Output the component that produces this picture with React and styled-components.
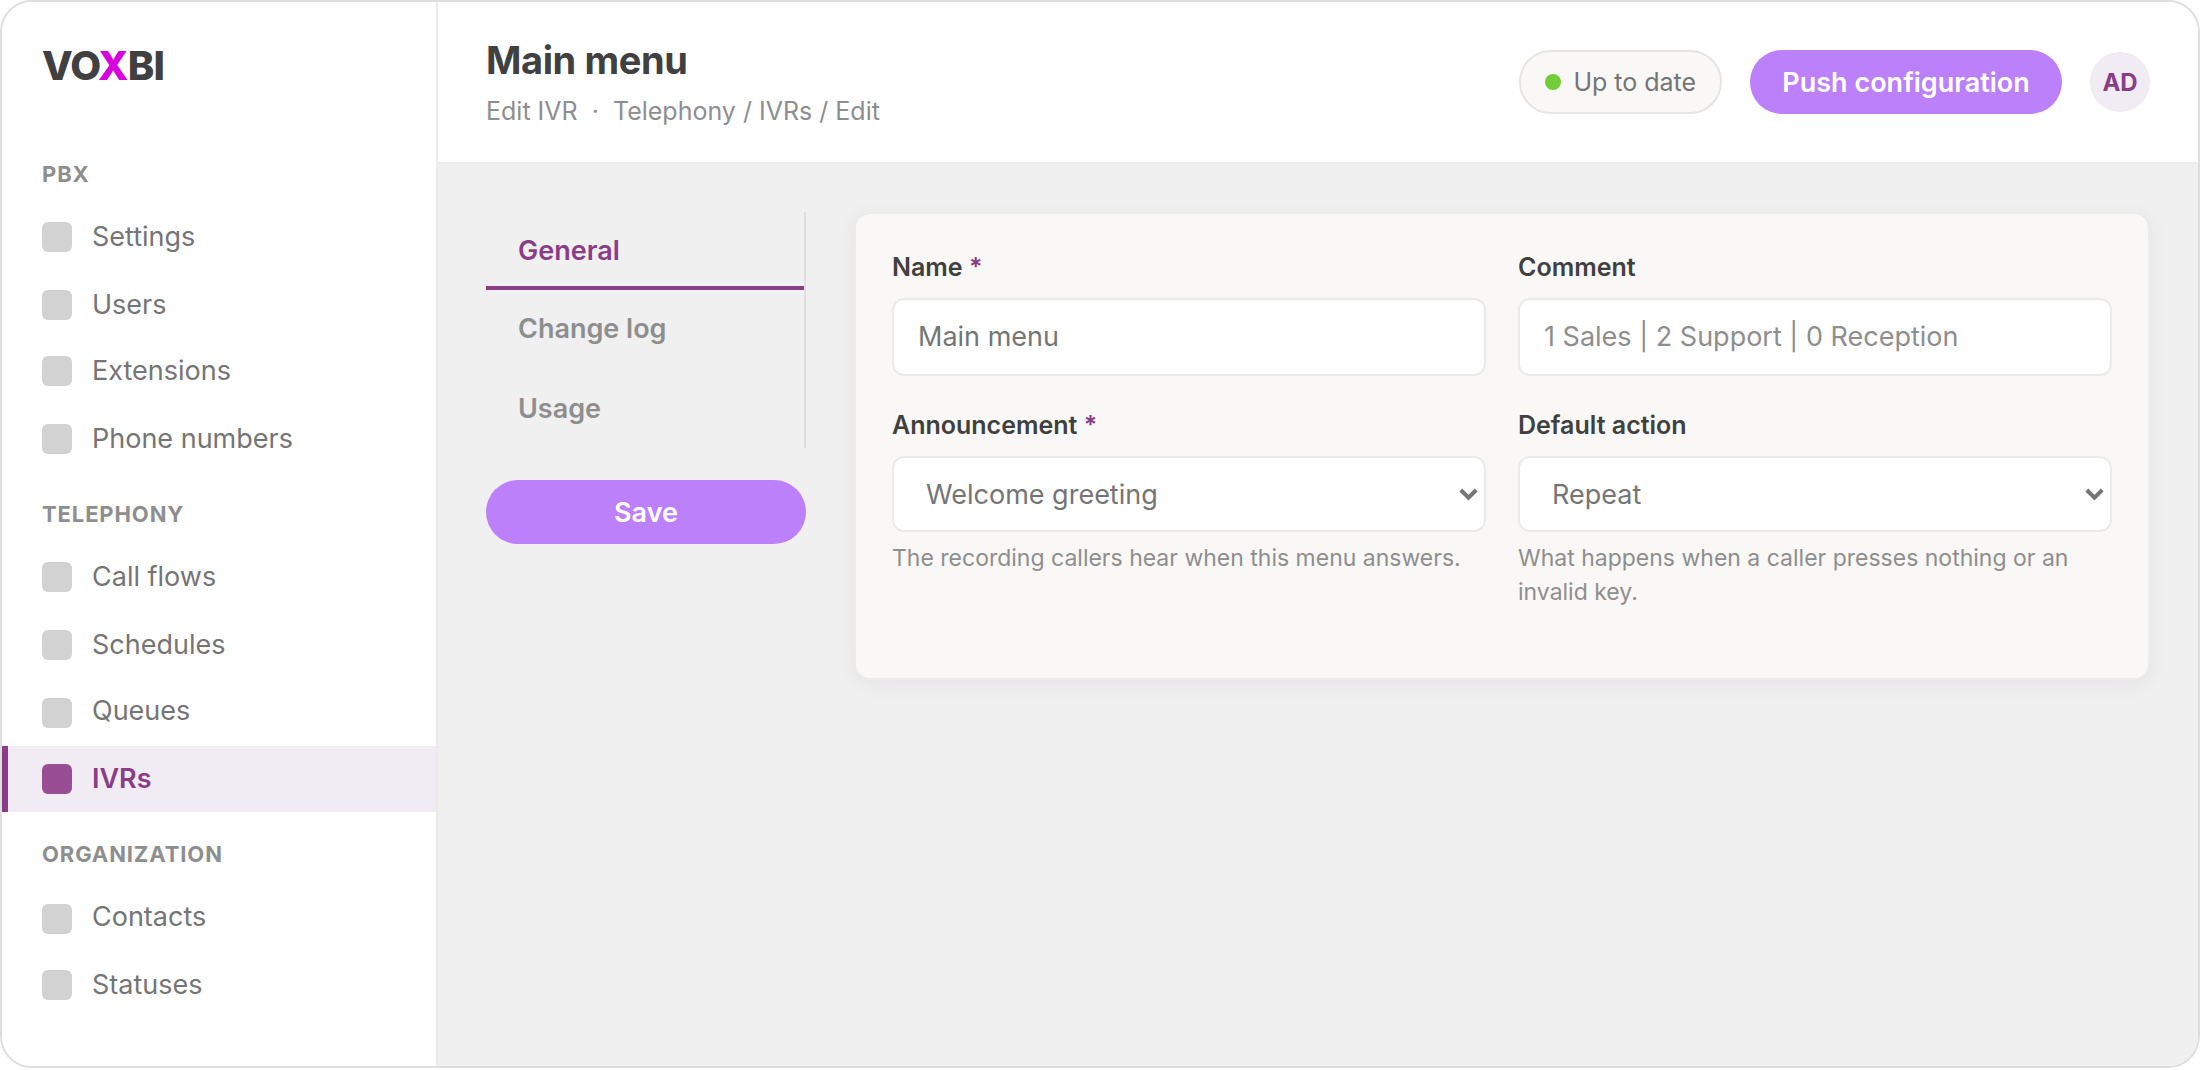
import React, {useState} from 'react'
import styled, {createGlobalStyle} from 'styled-components'

const purple = '#8a3d87'
const line = '#ebebea'

// h: row height, up: label offset from the icon line
const sections = [
  {title: 'PBX', height: 72, items: [
    {name: 'Settings', h: 68},
    {name: 'Users', h: 66},
    {name: 'Extensions', h: 68},
    {name: 'Phone numbers', h: 66},
  ]},
  {title: 'TELEPHONY', height: 72, items: [
    {name: 'Call flows', h: 68},
    {name: 'Schedules', h: 68},
    {name: 'Queues', h: 66, up: 2},
    {name: 'IVRs', h: 66},
  ]},
  {title: 'ORGANIZATION', height: 74, items: [
    {name: 'Contacts', h: 66, up: 2},
    {name: 'Statuses', h: 66},
  ]},
]

const tabs = [
  {name: 'General', h: 78},
  {name: 'Change log', h: 80},
  {name: 'Usage', h: 78},
]

export default function App(){
  const [page, setPage] = useState('IVRs')
  const [tab, setTab] = useState('General')
  return(
    <>
      <Global/>
      <Frame>
        <Sidebar>
          <Logo>VO<span>X</span>BI</Logo>
          {sections.map(s=>(
            <nav key={s.title}>
              <SectionTitle $h={s.height}>{s.title}</SectionTitle>
              {s.items.map(i=>(
                <NavItem key={i.name} $h={i.h} $active={i.name == page} onClick={()=>setPage(i.name)}>
                  <NavIcon $active={i.name == page}/>
                  <NavLabel $up={i.up || 0}>{i.name}</NavLabel>
                </NavItem>
              ))}
            </nav>
          ))}
        </Sidebar>
        <Main>
          <Header>
            <div>
              <Title>Main menu</Title>
              <Crumbs>Edit IVR &nbsp;·&nbsp; Telephony / IVRs / Edit</Crumbs>
            </div>
            <Actions>
              <Status><Dot/>Up to date</Status>
              <Button>Push configuration</Button>
              <Avatar>AD</Avatar>
            </Actions>
          </Header>
          <Content>
            <Side>
              <Tabs>
                {tabs.map(t=>(
                  <Tab key={t.name} $h={t.h} $active={t.name == tab} onClick={()=>setTab(t.name)}>{t.name}</Tab>
                ))}
              </Tabs>
              <Button>Save</Button>
            </Side>
            <Card>
              <Field>
                <Label>Name <b>*</b></Label>
                <Input>Main menu</Input>
              </Field>
              <Field>
                <Label>Comment</Label>
                <Input $muted>1 Sales | 2 Support | 0 Reception</Input>
              </Field>
              <Field>
                <Label>Announcement <b>*</b></Label>
                <Select>Welcome greeting<Chevron/></Select>
                <Hint>The recording callers hear when this menu answers.</Hint>
              </Field>
              <Field>
                <Label>Default action</Label>
                <Select>Repeat<Chevron/></Select>
                <Hint>What happens when a caller presses nothing or an invalid key.</Hint>
              </Field>
            </Card>
          </Content>
        </Main>
      </Frame>
    </>
  )
}

function Chevron(){
  return(
    <svg width='19' height='13' viewBox='0 0 19 13'>
      <path d='M1.8 2 L9.5 9.6 L17.2 2' fill='none' stroke='#757575' strokeWidth='4'/>
    </svg>
  )
}

const Global = createGlobalStyle`
  * { box-sizing: border-box; }
  body {
    margin: 0;
    background: #fff;
    font-family: Inter, sans-serif;
    font-size: 27px;
    color: #757575;
  }
`

const Frame = styled.div`
  display: flex;
  height: 1068px;
  border: 2px solid #dedede;
  border-radius: 32px;
  overflow: hidden;
`

const Sidebar = styled.aside`
  width: 436px;
  flex-shrink: 0;
  border-right: 2px solid ${line};
  background: #fff;
`

const Logo = styled.div`
  height: 130px;
  padding: 39px 40px 0;
  font-size: 40px;
  line-height: 49px;
  font-weight: 800;
  letter-spacing: -0.02em;
  color: #404040;
  span { color: #d600e0; }
`

const SectionTitle = styled.div`
  height: ${p=>p.$h}px;
  padding: 27px 40px 0;
  font-size: 22px;
  line-height: 30px;
  font-weight: 700;
  letter-spacing: 0.04em;
  color: #8e8e8e;
`

const NavItem = styled.div`
  display: flex;
  gap: 20px;
  height: ${p=>p.$h}px;
  padding: 18px 34px 0;
  border-left: 6px solid ${p=>p.$active ? purple : 'transparent'};
  background: ${p=>p.$active ? '#f1ebf4' : 'none'};
  color: ${p=>p.$active ? purple : '#757575'};
  font-weight: ${p=>p.$active ? 600 : 400};
  cursor: pointer;
`

const NavIcon = styled.span`
  width: 30px;
  height: 30px;
  border-radius: 6px;
  background: ${p=>p.$active ? '#984d94' : '#d2d2d2'};
`

const NavLabel = styled.span`
  line-height: 29px;
  margin-top: ${p=>-p.$up}px;
`

const Main = styled.main`
  flex: 1;
  display: flex;
  flex-direction: column;
  background: #f0f0f0;
`

const Header = styled.header`
  display: flex;
  align-items: center;
  justify-content: space-between;
  height: 162px;
  padding: 0 48px;
  background: #fff;
  border-bottom: 2px solid ${line};
`

const Title = styled.h1`
  margin: 0;
  font-size: 38px;
  line-height: 52px;
  font-weight: 700;
  letter-spacing: -0.01em;
  color: #404040;
`

const Crumbs = styled.div`
  margin-top: 6px;
  font-size: 25px;
  line-height: 38px;
  color: #8e8e8e;
`

const Actions = styled.div`
  display: flex;
  align-items: center;
  gap: 28px;
`

const Status = styled.div`
  display: flex;
  align-items: center;
  gap: 12px;
  height: 64px;
  padding: 0 24px;
  border: 2px solid #e5e5e4;
  border-radius: 32px;
  background: #f9f8f6;
  font-size: 25px;
`

const Dot = styled.span`
  width: 16px;
  height: 16px;
  border-radius: 50%;
  background: #72ce38;
`

const Button = styled.button`
  height: 64px;
  padding: 0 32.2px;
  border: 0;
  border-radius: 32px;
  background: #bc80fb;
  color: #fff;
  font: 600 27px Inter, sans-serif;
`

const Avatar = styled.div`
  display: flex;
  align-items: center;
  justify-content: center;
  width: 60px;
  height: 60px;
  border-radius: 50%;
  background: #f1ebf4;
  color: ${purple};
  font-size: 24px;
  font-weight: 700;
`

const Content = styled.div`
  display: flex;
  align-items: flex-start;
  gap: 48px;
  padding: 48px;
`

const Side = styled.div`
  display: flex;
  flex-direction: column;
  gap: 32px;
  width: 320px;
`

const Tabs = styled.div`
  border-right: 2px solid #dedede;
`

const Tab = styled.div`
  height: ${p=>p.$h}px;
  padding: 20px 32px 0;
  border-bottom: 4px solid ${p=>p.$active ? purple : 'transparent'};
  line-height: 37px;
  font-weight: 600;
  color: ${p=>p.$active ? purple : '#8e8e8e'};
  cursor: pointer;
`

const Card = styled.section`
  flex: 1;
  display: grid;
  grid-template-columns: 1fr 1fr;
  align-content: start;
  column-gap: 32px;
  height: 468px;
  padding: 36px;
  border: 2px solid ${line};
  border-radius: 16px;
  background: #f9f8f6;
  box-shadow: 0 4px 20px rgba(64, 20, 64, 0.06);
`

const Field = styled.div`
  margin-bottom: 32px;
`

const Label = styled.div`
  height: 48px;
  font-size: 25px;
  line-height: 34px;
  font-weight: 600;
  color: #404040;
  b {
    font-weight: 600;
    color: ${purple};
  }
`

const Input = styled.div`
  display: flex;
  align-items: center;
  height: 78px;
  padding: 0 24px 1px;
  border: 2px solid ${line};
  border-radius: 12px;
  background: #fff;
  color: ${p=>p.$muted ? '#8e8e8e' : '#757575'};
`

const Select = styled(Input)`
  justify-content: space-between;
  height: 76px;
  padding: 1px 6px 0 32px;
`

const Hint = styled.div`
  margin-top: 9px;
  font-size: 23px;
  line-height: 34px;
  color: #8e8e8e;
`
